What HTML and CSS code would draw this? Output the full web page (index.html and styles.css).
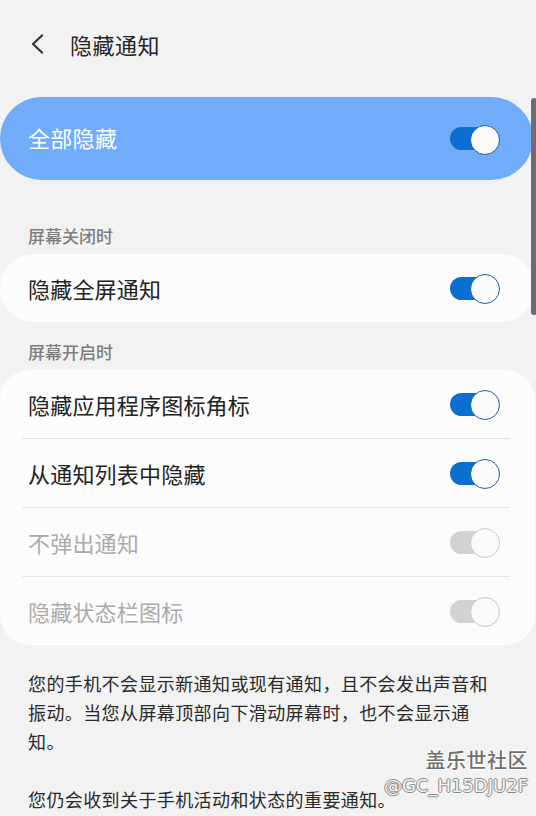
FILE: index.html
```html
<!DOCTYPE html>
<html lang="zh-CN">
<head>
<meta charset="utf-8">
<title>隐藏通知</title>
<link rel="stylesheet" href="styles.css">
</head>
<body>
<div class="page">
  <header class="header">
    <svg class="back" width="14" height="20" viewBox="0 0 14 20"><path d="M12 1.5 L3 10 L12 18.5" fill="none" stroke="#333" stroke-width="2.2" stroke-linecap="round" stroke-linejoin="round"/></svg>
    <h1 class="title">隐藏通知</h1>
  </header>

  <div class="master">
    <span class="master-label">全部隐藏</span>
    <span class="toggle on"></span>
  </div>

  <div class="section-label first">屏幕关闭时</div>
  <div class="card pill">
    <div class="row"><span class="row-label">隐藏全屏通知</span><span class="toggle on"></span></div>
  </div>

  <div class="section-label">屏幕开启时</div>
  <div class="card">
    <div class="row"><span class="row-label">隐藏应用程序图标角标</span><span class="toggle on"></span></div>
    <div class="divider"></div>
    <div class="row"><span class="row-label">从通知列表中隐藏</span><span class="toggle on"></span></div>
    <div class="divider"></div>
    <div class="row disabled"><span class="row-label">不弹出通知</span><span class="toggle off"></span></div>
    <div class="divider"></div>
    <div class="row disabled"><span class="row-label">隐藏状态栏图标</span><span class="toggle off"></span></div>
  </div>

  <div class="desc">
    <p>您的手机不会显示新通知或现有通知，且不会发出声音和振动。当您从屏幕顶部向下滑动屏幕时，也不会显示通知。</p>
    <p>您仍会收到关于手机活动和状态的重要通知。</p>
  </div>

  <div class="scrollbar"></div>
  <div class="watermark">
    <div class="wm-brand">盖乐世社区</div>
    <div class="wm-user">@GC_H15DJU2F</div>
  </div>
</div>
</body>
</html>
```

FILE: styles.css
```css
* { box-sizing: border-box; }
html, body {
  margin: 0;
  padding: 0;
  background: #f2f2f2;
}
body {
  font-family: "Noto Sans CJK SC", "Noto Sans", sans-serif;
  color: #222;
}
.page {
  position: relative;
  width: 536px;
  height: 816px;
  overflow: hidden;
}
.header {
  height: 90px;
  display: flex;
  align-items: center;
  padding-left: 30px;
  padding-bottom: 3px;
}
.back {
  display: block;
  margin-top: 1px;
}
.title {
  margin: 0 0 0 26px;
  font-size: 22px;
  font-weight: 400;
  color: #252525;
  letter-spacing: 0.5px;
}
.master {
  margin-top: 7px;
  width: 533px;
  height: 83px;
  border-radius: 42px;
  background: #70acf9;
  display: flex;
  align-items: center;
  justify-content: space-between;
  padding: 0 33px 3px 28px;
}
.master-label {
  color: #fff;
  font-size: 22px;
  letter-spacing: 0.3px;
}
.master .toggle {
  margin-top: 3px;
}
.section-label {
  font-size: 17px;
  line-height: 24px;
  color: #7d7d7d;
  font-weight: 500;
  padding: 18px 0 6px 28px;
}
.section-label.first {
  padding-top: 44px;
}
.card {
  width: 535px;
  background: #fcfcfc;
  border-radius: 30px;
  display: flex;
  flex-direction: column;
}
.card.pill {
  border-radius: 34px;
}
.row {
  height: 68px;
  display: flex;
  align-items: center;
  justify-content: space-between;
  padding: 0 35px 0 28px;
}
.row-label {
  font-size: 22px;
  color: #222;
  letter-spacing: 0.2px;
}
.row.disabled .row-label {
  color: #ababab;
}
.divider {
  height: 1px;
  background: #e4e4e4;
  margin: 0 25px 0 22px;
}
.toggle {
  position: relative;
  width: 50px;
  height: 28px;
  flex: none;
}
.toggle::before {
  content: "";
  position: absolute;
  left: 0;
  top: 2.5px;
  width: 44px;
  height: 23px;
  border-radius: 12px;
  background: #0b6fd2;
}
.toggle::after {
  content: "";
  position: absolute;
  right: 0;
  top: 0;
  width: 28px;
  height: 28px;
  border-radius: 50%;
  background: #fafafa;
  border: 1.6px solid #1c5ea8;
}
.toggle.off::before {
  background: #d2d2d2;
}
.toggle.off::after {
  border-color: #c9c9c9;
}
.desc {
  padding: 24px 0 0 28px;
}
.desc p {
  width: 465px;
  margin: 0 0 29px;
  font-size: 18px;
  line-height: 29px;
  letter-spacing: 0.4px;
  color: #2a2a2a;
}
.scrollbar {
  position: absolute;
  left: 531px;
  top: 98px;
  width: 6px;
  height: 217px;
  border-radius: 3px;
  background: #6f6b73;
}
.watermark {
  position: absolute;
  right: 8px;
  top: 748px;
  display: flex;
  flex-direction: column;
  align-items: flex-end;
}
.wm-brand {
  font-size: 20px;
  line-height: 24px;
  font-weight: 500;
  color: #707070;
  letter-spacing: 0.5px;
  text-shadow: -1px 0 0 #fff, 1px 0 0 #fff, 0 -1px 0 #fff, 0 1px 0 #fff;
}
.wm-user {
  font-family: "DejaVu Sans", sans-serif;
  font-size: 18px;
  line-height: 28px;
  color: #f4f4f4;
  text-shadow: -1px 0 0 #8a8a8a, 1px 0 0 #8a8a8a, 0 -1px 0 #8a8a8a, 0 1px 0 #8a8a8a;
}
```
